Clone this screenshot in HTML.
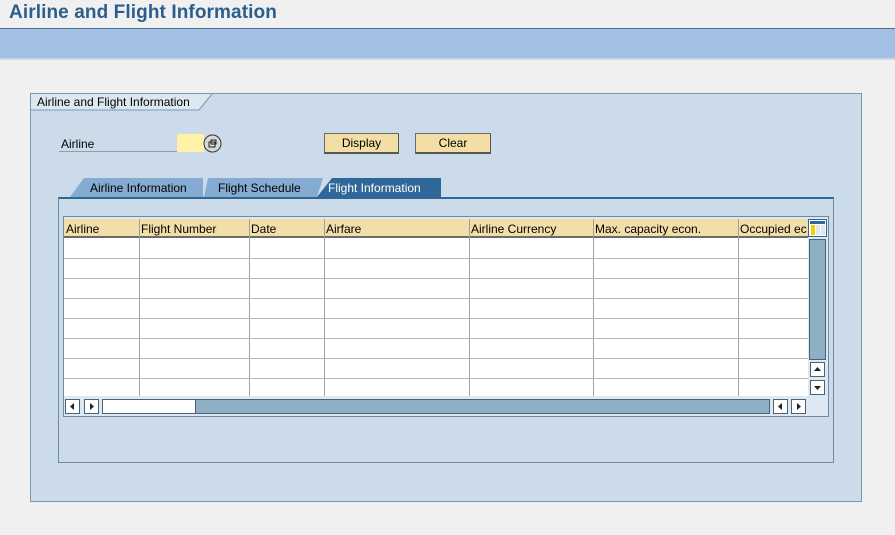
<!DOCTYPE html>
<html><head><style>
*{margin:0;padding:0;box-sizing:border-box}
body{width:895px;height:535px;background:#f0f0f0;font-family:"Liberation Sans",sans-serif;font-size:12px;color:#000;position:relative;overflow:hidden}
.a{position:absolute}
.btn{position:absolute;background:#f3dfa5;border:1px solid #6a6a6a;border-right-color:#555;border-bottom:2px solid #555;text-align:center;line-height:19px;font-size:12px}
.sb{position:absolute;width:15px;height:15px;background:#fff;border:1px solid #4a6276}
</style></head><body>
<div class="a" style="left:9px;top:2px;font-size:19px;font-weight:bold;color:#2a5f8d;letter-spacing:0.1px">Airline and Flight Information</div>
<div class="a" style="left:0;top:28px;width:895px;height:1px;background:#4b6f8e"></div>
<div class="a" style="left:0;top:29px;width:895px;height:29px;background:#a3bfe3"></div>
<div class="a" style="left:0;top:58px;width:895px;height:2px;background:#c9d8ea"></div>

<div class="a" style="left:30px;top:93px;width:832px;height:409px;background:#cbdbea;border:1px solid #7a96ad"></div>
<svg class="a" style="left:31px;top:94px" width="182" height="17"><polygon points="0,0 181,0 168,16 0,16" fill="#dbe8f2"/><polyline points="0,16 168,16 181,0" fill="none" stroke="#7a96ad"/></svg>
<div class="a" style="left:37px;top:95px;font-size:12px">Airline and Flight Information</div>

<div class="a" style="left:61px;top:137px">Airline</div>
<div class="a" style="left:59px;top:151px;width:118px;height:1px;background:#8aa0b3"></div>
<div class="a" style="left:177px;top:134px;width:27px;height:18px;background:#fff2a6"></div>
<svg class="a" style="left:203px;top:134px" width="19" height="19"><circle cx="9.5" cy="9.5" r="8.5" fill="#d8d8d8" stroke="#333"/><rect x="6" y="8" width="6" height="5" fill="none" stroke="#222"/><rect x="8" y="6" width="5" height="4" fill="none" stroke="#222"/></svg>
<div class="btn" style="left:324px;top:133px;width:75px;height:21px">Display</div>
<div class="btn" style="left:415px;top:133px;width:76px;height:21px">Clear</div>

<svg class="a" style="left:58px;top:178px" width="385" height="20">
<polygon points="12,19 26,0 145,0 145,19" fill="#86abd3"/>
<polygon points="146,19 150,0 265,0 259,19" fill="#86abd3"/>
<polygon points="259,19 274,0 383,0 383,19" fill="#2f6898"/>
</svg>
<div class="a" style="left:90px;top:181px">Airline Information</div>
<div class="a" style="left:218px;top:181px">Flight Schedule</div>
<div class="a" style="left:328px;top:181px;color:#fff">Flight Information</div>
<div class="a" style="left:58px;top:197px;width:776px;height:266px;border:1px solid #6d8aa4;border-top:2px solid #2f6898"></div>

<div class="a" style="left:63px;top:216px;width:766px;height:201px;border:1px solid #6d8aa4;background:#dde8f2"></div>
<div class="a" style="left:64px;top:219px;width:744px;height:177px;background:#fff;overflow:hidden">
<div class="a" style="left:0;top:0;width:744px;height:19px;background:#f2dea9;border-bottom:2px solid #6b6b6b"></div>
<div class="a" style="left:2px;top:3px">Airline</div>
<div class="a" style="left:77px;top:3px">Flight Number</div>
<div class="a" style="left:187px;top:3px">Date</div>
<div class="a" style="left:262px;top:3px">Airfare</div>
<div class="a" style="left:407px;top:3px">Airline Currency</div>
<div class="a" style="left:531px;top:3px">Max. capacity econ.</div>
<div class="a" style="left:676px;top:3px;white-space:nowrap">Occupied ec</div>
<div class="a" style="left:75px;top:0;width:1px;height:177px;background:#a0a0a0"></div>
<div class="a" style="left:185px;top:0;width:1px;height:177px;background:#a0a0a0"></div>
<div class="a" style="left:260px;top:0;width:1px;height:177px;background:#a0a0a0"></div>
<div class="a" style="left:405px;top:0;width:1px;height:177px;background:#a0a0a0"></div>
<div class="a" style="left:529px;top:0;width:1px;height:177px;background:#a0a0a0"></div>
<div class="a" style="left:674px;top:0;width:1px;height:177px;background:#a0a0a0"></div>
<div class="a" style="left:0;top:39px;width:744px;height:1px;background:#b5b5b5"></div>
<div class="a" style="left:0;top:59px;width:744px;height:1px;background:#b5b5b5"></div>
<div class="a" style="left:0;top:79px;width:744px;height:1px;background:#b5b5b5"></div>
<div class="a" style="left:0;top:99px;width:744px;height:1px;background:#b5b5b5"></div>
<div class="a" style="left:0;top:119px;width:744px;height:1px;background:#b5b5b5"></div>
<div class="a" style="left:0;top:139px;width:744px;height:1px;background:#b5b5b5"></div>
<div class="a" style="left:0;top:159px;width:744px;height:1px;background:#b5b5b5"></div>
</div>
<svg class="a" style="left:808px;top:219px" width="19" height="18"><rect x="0.5" y="0.5" width="18" height="17" fill="#fff" stroke="#2f6898"/><rect x="2" y="2" width="15" height="3" fill="#2f6898"/><rect x="3" y="6" width="4" height="10" fill="#f4d000"/><rect x="8" y="6" width="4" height="10" fill="#dfe6ee"/><rect x="13" y="6" width="4" height="10" fill="#dfe6ee"/></svg>
<div class="a" style="left:809px;top:239px;width:17px;height:121px;background:#8fb0c4;border:1px solid #4a6276"></div>
<div class="sb" style="left:810px;top:362px"><svg width="13" height="13"><polygon points="3,8 10,8 6.5,4" fill="#222"/></svg></div>
<div class="sb" style="left:810px;top:380px"><svg width="13" height="13"><polygon points="3,5 10,5 6.5,9" fill="#222"/></svg></div>
<div class="sb" style="left:65px;top:399px"><svg width="13" height="13"><polygon points="8,3 8,10 4,6.5" fill="#222"/></svg></div>
<div class="sb" style="left:84px;top:399px"><svg width="13" height="13"><polygon points="5,3 5,10 9,6.5" fill="#222"/></svg></div>
<div class="a" style="left:102px;top:399px;width:668px;height:15px;background:#8fb0c4;border:1px solid #4a6276"></div>
<div class="a" style="left:103px;top:400px;width:93px;height:13px;background:#fff;border-right:1px solid #4a6276"></div>
<div class="sb" style="left:773px;top:399px"><svg width="13" height="13"><polygon points="8,3 8,10 4,6.5" fill="#222"/></svg></div>
<div class="sb" style="left:791px;top:399px"><svg width="13" height="13"><polygon points="5,3 5,10 9,6.5" fill="#222"/></svg></div>
</body></html>
